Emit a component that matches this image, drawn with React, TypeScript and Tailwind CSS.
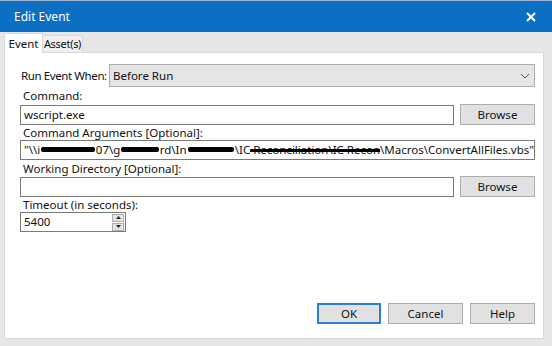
import * as React from "react";

const font = { fontFamily: '"Noto Sans", "Open Sans", sans-serif' };

function Button({ label, w, primary }: { label: string; w: string; primary?: boolean }) {
  return (
    <div
      className={`flex h-[21px] items-center justify-center bg-[#e1e1e1] text-[#111] ${w} ${
        primary ? "border-2 border-[#2a7fd8]" : "border border-[#adadad]"
      }`}
    >
      {label}
    </div>
  );
}

// marker-style blackout over part of the path
function Bar({ w }: { w: string }) {
  return <span className={`mx-[1px] inline-block h-[5px] translate-y-[-1px] rounded-[2px] bg-black align-middle ${w}`} />;
}

export default function App() {
  return (
    <div style={font} className="flex h-[346px] w-[552px] flex-col overflow-hidden border-t border-[#9fb7d0] bg-[#e6e6e6] text-[11.5px] text-[#111]">
      {/* title bar */}
      <div className="flex h-[31px] shrink-0 items-center justify-between bg-[#0b6fc4] pl-[14px] pr-[16px] text-white">
        <span className="text-[12px]">Edit Event</span>
        <svg width="10" height="10" viewBox="0 0 10 10">
          <path d="M1 1 L9 9 M9 1 L1 9" stroke="white" strokeWidth="2" />
        </svg>
      </div>

      {/* tabs */}
      <div className="flex h-[20px] shrink-0 items-end pl-[4px]">
        <div className="relative z-10 -mb-px flex h-[20px] w-[39px] items-center justify-center border border-b-0 border-[#d9d9d9] bg-white">
          Event
        </div>
        <div className="flex h-[17px] w-[40px] items-center justify-center border border-b-0 border-l-0 border-[#d9d9d9] bg-[#f0f0f0] text-[11px] tracking-[-0.3px]">
          Asset(s)
        </div>
      </div>

      {/* panel */}
      <div className="ml-[4px] mr-[8px] flex h-[287px] flex-col border border-[#d9d9d9] bg-white pl-[15px] pr-[8px] pt-[11px]">
        <div className="flex items-center">
          <span className="w-[89px] shrink-0 whitespace-nowrap pl-[1px] tracking-[-0.4px]">Run Event When:</span>
          <div className="flex h-[23px] flex-1 items-center justify-between border border-[#adadad] bg-[#e5e5e5] pl-[3px] pr-[4px]">
            <span>Before Run</span>
            <svg width="10" height="6" viewBox="0 0 10 6">
              <path d="M1 1 L5 5 L9 1" fill="none" stroke="#555" strokeWidth="1" />
            </svg>
          </div>
        </div>

        <span className="h-[17px] pl-[3px] leading-[17px]">Command:</span>
        <div className="flex items-center gap-[6px]">
          <div className="flex h-[20px] flex-1 items-center border border-[#7a7a7a] pl-[3px]">wscript.exe</div>
          <Button label="Browse" w="w-[75px]" />
        </div>

        <span className="h-[15px] pl-[3px] leading-[15px]">Command Arguments [Optional]:</span>
        <div className="flex h-[20px] items-center overflow-hidden whitespace-nowrap border border-[#7a7a7a] pl-[3px]">
          "\\i<Bar w="w-[72px]" />07\g<Bar w="w-[50px]" />rd\In<Bar w="w-[62px]" />\IC
          <span className="line-through decoration-black decoration-[3px]">&nbsp;Reconciliation\IC Recon</span>\Macros\ConvertAllFiles.vbs"
        </div>

        <span className="mt-[1px] h-[15px] pl-[3px] leading-[15px]">Working Directory [Optional]:</span>
        <div className="flex items-center gap-[6px]">
          <div className="h-[20px] flex-1 border border-[#7a7a7a]" />
          <Button label="Browse" w="w-[75px]" />
        </div>

        <span className="h-[15px] pl-[3px] leading-[15px]">Timeout (in seconds):</span>
        <div className="flex h-[20px] w-[106px] items-center justify-between border border-[#7a7a7a] pl-[3px] pr-[1px]">
          <span>5400</span>
          <div className="flex flex-col gap-[1px]">
            <div className="flex h-[8px] w-[12px] items-center justify-center border border-[#adadad] bg-[#e5e5e5]">
              <svg width="5" height="3" viewBox="0 0 5 3"><path d="M2.5 0 L5 3 L0 3 Z" fill="#222" /></svg>
            </div>
            <div className="flex h-[8px] w-[12px] items-center justify-center border border-[#adadad] bg-[#e5e5e5]">
              <svg width="5" height="3" viewBox="0 0 5 3"><path d="M0 0 L5 0 L2.5 3 Z" fill="#222" /></svg>
            </div>
          </div>
        </div>

        <div className="mt-auto mb-[14px] flex justify-end">
          <Button label="OK" w="w-[64px]" primary />
          <div className="w-[7px]" />
          <Button label="Cancel" w="w-[75px]" />
          <div className="w-[7px]" />
          <Button label="Help" w="w-[65px]" />
        </div>
      </div>
    </div>
  );
}
